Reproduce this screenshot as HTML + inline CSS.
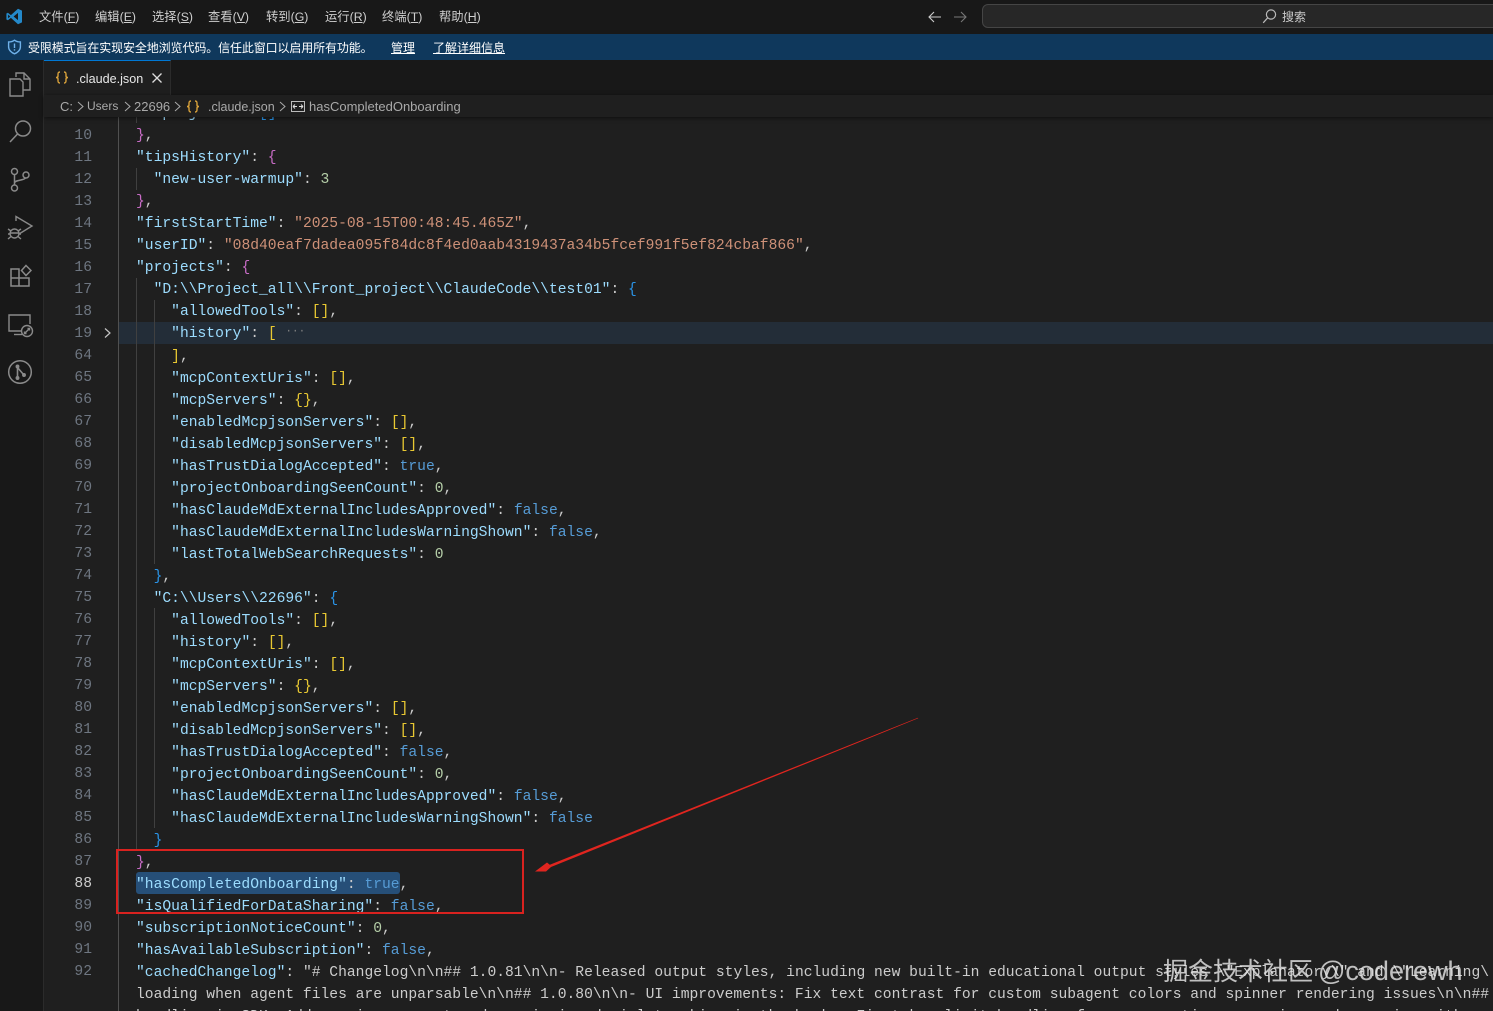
<!DOCTYPE html>
<html lang="zh">
<head>
<meta charset="utf-8">
<title>.claude.json</title>
<style>
html,body{margin:0;padding:0;background:#1f1f1f;}
#app{position:relative;width:1493px;height:1011px;overflow:hidden;background:#1f1f1f;font-family:"Liberation Sans","Noto Sans CJK SC",sans-serif;color:#ccc;}
.abs{position:absolute;}
#top{left:0;top:0;width:1493px;height:34px;background:#181818;}
.m{position:absolute;top:9px;font-size:12.3px;line-height:16px;color:#cfcfcf;white-space:nowrap;}
.m u{text-underline-offset:1px;}
#banner{left:0;top:34px;width:1493px;height:26px;background:#0f385c;}
#banner .t{position:absolute;top:6px;font-size:12px;line-height:16px;color:#fff;white-space:nowrap;}
#act{left:0;top:60px;width:43px;height:951px;background:#181818;border-right:1px solid #2b2b2b;}
#tabs{left:44px;top:60px;width:1449px;height:35px;background:#181818;}
#tab{left:44px;top:60px;width:127px;height:35px;background:#1f1f1f;border-top:1px solid #0078d4;border-right:1px solid #2b2b2b;box-sizing:border-box;}
#crumb{left:44px;top:95px;width:1449px;height:22px;background:#1f1f1f;box-shadow:0 1px 4px rgba(0,0,0,.55);z-index:5;font-size:13px;line-height:23px;color:#a9a9a9;white-space:nowrap;}
#crumb span{position:absolute;top:0;}
#code,#nums{font-family:"Liberation Mono",monospace;font-size:14.65px;line-height:22px;white-space:pre;}
#nums{left:44px;top:103px;width:48px;text-align:right;color:#6e7681;}
#nums b{font-weight:normal;color:#ccc;}
#code{left:136px;top:103px;width:1357px;color:#ccc;z-index:2;}
.k{color:#9cdcfe}.s{color:#ce9178}.n{color:#b5cea8}.b{color:#569cd6}
.y{color:#e8c832}.p{color:#c86cc6}.c{color:#2a93e6}
.g{position:absolute;width:1px;background:#404040;}
</style>
</head>
<body>
<div id="app">
  <div id="top" class="abs">
    <svg class="abs" style="left:6px;top:8px" width="17" height="17" viewBox="0 0 17 17"><path d="M12 0.7 L16 2.6 V14.4 L12 16.3 L4.9 9.9 L1.9 12.3 L0.4 11.5 V5.5 L1.9 4.7 L4.9 7.1 Z M12 4.9 L7.6 8.5 L12 12.1 Z M2.1 6.7 V10.3 L4.2 8.5 Z" fill="#2489ca" fill-rule="evenodd"/></svg>
    <span class="m" style="left:39px">文件(<u>F</u>)</span>
    <span class="m" style="left:95px">编辑(<u>E</u>)</span>
    <span class="m" style="left:152px">选择(<u>S</u>)</span>
    <span class="m" style="left:208px">查看(<u>V</u>)</span>
    <span class="m" style="left:266px">转到(<u>G</u>)</span>
    <span class="m" style="left:325px">运行(<u>R</u>)</span>
    <span class="m" style="left:382px">终端(<u>T</u>)</span>
    <span class="m" style="left:439px">帮助(<u>H</u>)</span>
    <svg class="abs" style="left:927px;top:9px" width="16" height="16" viewBox="0 0 16 16" fill="none" stroke="#ccc" stroke-width="1.1"><path d="M2 8 H14 M7 3 L2 8 L7 13"/></svg>
    <svg class="abs" style="left:952px;top:9px" width="16" height="16" viewBox="0 0 16 16" fill="none" stroke="#777" stroke-width="1.1"><path d="M2 8 H14 M9 3 L14 8 L9 13"/></svg>
    <div class="abs" style="left:982px;top:4px;width:530px;height:24px;box-sizing:border-box;background:#272727;border:1px solid #454545;border-radius:6px;"></div>
    <svg class="abs" style="left:1262px;top:8px" width="15" height="16" viewBox="0 0 15 16" fill="none" stroke="#bbb" stroke-width="1.2"><circle cx="9" cy="6.5" r="4.6"/><path d="M5.7 9.8 L1.2 14.8"/></svg>
    <span class="m" style="left:1282px;color:#ccc;font-size:12px">搜索</span>
  </div>

  <div id="banner" class="abs">
    <svg class="abs" style="left:7px;top:5px" width="15" height="16" viewBox="0 0 15 16" fill="none" stroke="#6fb1ea" stroke-width="1.4"><path d="M7.5 1.2 C9.5 2.6 11.5 3 13.4 3 V8 C13.4 11 10.5 13.7 7.5 14.8 C4.5 13.7 1.6 11 1.6 8 V3 C3.5 3 5.5 2.6 7.5 1.2 Z"/><path d="M7.5 4.5 V9 M7.5 10.2 V11.6"/></svg>
    <span class="t" style="left:28px;letter-spacing:-0.12px">受限模式旨在实现安全地浏览代码。信任此窗口以启用所有功能。</span>
    <span class="t" style="left:391px;text-decoration:underline">管理</span>
    <span class="t" style="left:433px;text-decoration:underline">了解详细信息</span>
  </div>

  <div id="act" class="abs">
    <svg class="abs" style="left:8px;top:11px" width="24" height="26" viewBox="0 0 24 26" fill="none" stroke="#8a8a8a" stroke-width="1.4"><path d="M8 6 V2 H16 L22 8 V19 H15"/><path d="M16 2 V8 H22"/><path d="M2 8 H12 L15 11 V25 H2 Z"/></svg>
    <svg class="abs" style="left:8px;top:59px" width="25" height="25" viewBox="0 0 25 25" fill="none" stroke="#8a8a8a" stroke-width="1.5"><circle cx="15" cy="9.5" r="7.5"/><path d="M9.5 15 L2 23"/></svg>
    <svg class="abs" style="left:9px;top:107px" width="22" height="26" viewBox="0 0 22 26" fill="none" stroke="#8a8a8a" stroke-width="1.5"><circle cx="5.5" cy="4.5" r="3"/><circle cx="5.5" cy="21" r="3"/><circle cx="17" cy="8" r="3"/><path d="M5.5 7.5 V18 M5.5 16 C6 12.5 14 14 16.5 11"/></svg>
    <svg class="abs" style="left:7px;top:155px" width="27" height="26" viewBox="0 0 27 26" fill="none" stroke="#8a8a8a" stroke-width="1.4"><path d="M9 6 V1.5 L25 11 L12 19"/><circle cx="7.5" cy="18.5" r="4.5"/><path d="M1 14 L4 16 M1 19 H3 M1 24 L4 21.5 M14 14 L11 16 M14 19 H12 M14 24 L11 21.5 M3 18 H12"/></svg>
    <svg class="abs" style="left:9px;top:204px" width="23" height="24" viewBox="0 0 23 24" fill="none" stroke="#8a8a8a" stroke-width="1.5"><path d="M2 5 H10 V22 H2 Z M2 14 H20 V22 H10 V5"/><path d="M17 1.5 L22 6.5 L17 11.5 L12.5 6.5 Z"/></svg>
    <svg class="abs" style="left:7px;top:253px" width="27" height="25" viewBox="0 0 27 25" fill="none" stroke="#8a8a8a" stroke-width="1.4"><path d="M15 18 H2 V2 H23 V11"/><path d="M7 21.5 H15"/><circle cx="20" cy="18" r="5.5"/><path d="M17.5 20.5 L22.5 15.5 M20.5 15.5 H22.5 V17.5 M17.5 18.5 V20.5 H19.5"/></svg>
    <svg class="abs" style="left:7px;top:299px" width="26" height="26" viewBox="0 0 26 26" fill="none" stroke="#8a8a8a" stroke-width="1.5"><circle cx="13" cy="13" r="11.3"/><path d="M10.5 7 V20 M10.5 8.5 L16.5 15.5" stroke-width="1.6"/><circle cx="10.5" cy="7.5" r="1.2" fill="#8a8a8a"/><circle cx="10.5" cy="19" r="1.2" fill="#8a8a8a"/><circle cx="17" cy="16" r="1.2" fill="#8a8a8a"/></svg>
  </div>

  <div id="tabs" class="abs"></div>
  <div id="tab" class="abs">
    <svg class="abs" style="left:11px;top:10px" width="14" height="13" viewBox="0 0 14 13" fill="none" stroke="#d9a23b" stroke-width="1.4"><path d="M5 1 C3.2 1 3 2 3 3.5 V5 C3 6 2 6.5 1 6.5 C2 6.5 3 7 3 8 V9.5 C3 11 3.2 12 5 12"/><path d="M9 1 C10.8 1 11 2 11 3.5 V5 C11 6 12 6.5 13 6.5 C12 6.5 11 7 11 8 V9.5 C11 11 10.8 12 9 12"/></svg>
    <span class="abs" style="left:32px;top:10px;font-size:12.6px;line-height:17px;color:#e8e8e8;white-space:nowrap;">.claude.json</span>
    <svg class="abs" style="left:107px;top:11px" width="12" height="12" viewBox="0 0 12 12" stroke="#ddd" stroke-width="1.3"><path d="M1.5 1.5 L10.5 10.5 M10.5 1.5 L1.5 10.5"/></svg>
  </div>

  <div id="crumb" class="abs">
    <span style="left:16px">C:</span>
    <svg class="abs" style="left:32px;top:6px" width="9" height="11" viewBox="0 0 9 11" fill="none" stroke="#aaa"><path d="M2 1 L7 5.5 L2 10"/></svg>
    <span style="left:43px;font-size:12px">Users</span>
    <svg class="abs" style="left:79px;top:6px" width="9" height="11" viewBox="0 0 9 11" fill="none" stroke="#aaa"><path d="M2 1 L7 5.5 L2 10"/></svg>
    <span style="left:90px">22696</span>
    <svg class="abs" style="left:129px;top:6px" width="9" height="11" viewBox="0 0 9 11" fill="none" stroke="#aaa"><path d="M2 1 L7 5.5 L2 10"/></svg>
    <svg class="abs" style="left:142px;top:5px" width="14" height="13" viewBox="0 0 14 13" fill="none" stroke="#d9a23b" stroke-width="1.4"><path d="M5 1 C3.2 1 3 2 3 3.5 V5 C3 6 2 6.5 1 6.5 C2 6.5 3 7 3 8 V9.5 C3 11 3.2 12 5 12"/><path d="M9 1 C10.8 1 11 2 11 3.5 V5 C11 6 12 6.5 13 6.5 C12 6.5 11 7 11 8 V9.5 C11 11 10.8 12 9 12"/></svg>
    <span style="left:164px;top:1px;font-size:12.5px">.claude.json</span>
    <svg class="abs" style="left:234px;top:6px" width="9" height="11" viewBox="0 0 9 11" fill="none" stroke="#aaa"><path d="M2 1 L7 5.5 L2 10"/></svg>
    <svg class="abs" style="left:247px;top:6px" width="14" height="11" viewBox="0 0 14 11"><rect x="0.5" y="0.5" width="13" height="10" fill="none" stroke="#bbb"/><path d="M2 5.5 H6 M2 5.5 L4 3.5 M2 5.5 L4 7.5 M12 5.5 H8 M12 5.5 L10 3.5 M12 5.5 L10 7.5" stroke="#ddd" fill="none"/></svg>
    <span style="left:265px">hasCompletedOnboarding</span>
  </div>

  <!-- folded line highlight -->
  <div class="abs" style="left:119px;top:322px;width:1374px;height:22px;background:#232d38;"></div>
  <!-- selection -->
  <div class="abs" style="left:136px;top:872px;width:264px;height:22px;background:#264f78;border-radius:3px;"></div>

  <!-- guides -->
  <div class="g" style="left:118px;top:117px;height:894px;background:#505050;"></div>
  <div class="g" style="left:136px;top:117px;height:6px;"></div>
  <div class="g" style="left:136px;top:168px;height:22px;"></div>
  <div class="g" style="left:136px;top:278px;height:572px;"></div>
  <div class="g" style="left:154px;top:300px;height:264px;"></div>
  <div class="g" style="left:154px;top:608px;height:220px;"></div>

  <div id="nums" class="abs"> 9
10
11
12
13
14
15
16
17
18
19
64
65
66
67
68
69
70
71
72
73
74
75
76
77
78
79
80
81
82
83
84
85
86
87
<b>88</b>
89
90
91
92</div>

  <svg class="abs" style="left:103px;top:327px" width="9" height="12" viewBox="0 0 9 12" fill="none" stroke="#c5c5c5" stroke-width="1.2"><path d="M2 1.5 L7 6 L2 10.5"/></svg>

  <div id="code" class="abs">  <span class="k">"projects"</span>: <span class="c">[]</span>
<span class="p">}</span>,
<span class="k">"tipsHistory"</span>: <span class="p">{</span>
  <span class="k">"new-user-warmup"</span>: <span class="n">3</span>
<span class="p">}</span>,
<span class="k">"firstStartTime"</span>: <span class="s">"2025-08-15T00:48:45.465Z"</span>,
<span class="k">"userID"</span>: <span class="s">"08d40eaf7dadea095f84dc8f4ed0aab4319437a34b5fcef991f5ef824cbaf866"</span>,
<span class="k">"projects"</span>: <span class="p">{</span>
  <span class="k">"D:\\Project_all\\Front_project\\ClaudeCode\\test01"</span>: <span class="c">{</span>
    <span class="k">"allowedTools"</span>: <span class="y">[]</span>,
    <span class="k">"history"</span>: <span class="y">[</span> <span style="color:#808080;font-size:11px;position:relative;top:-3px">···</span>
    <span class="y">]</span>,
    <span class="k">"mcpContextUris"</span>: <span class="y">[]</span>,
    <span class="k">"mcpServers"</span>: <span class="y">{}</span>,
    <span class="k">"enabledMcpjsonServers"</span>: <span class="y">[]</span>,
    <span class="k">"disabledMcpjsonServers"</span>: <span class="y">[]</span>,
    <span class="k">"hasTrustDialogAccepted"</span>: <span class="b">true</span>,
    <span class="k">"projectOnboardingSeenCount"</span>: <span class="n">0</span>,
    <span class="k">"hasClaudeMdExternalIncludesApproved"</span>: <span class="b">false</span>,
    <span class="k">"hasClaudeMdExternalIncludesWarningShown"</span>: <span class="b">false</span>,
    <span class="k">"lastTotalWebSearchRequests"</span>: <span class="n">0</span>
  <span class="c">}</span>,
  <span class="k">"C:\\Users\\22696"</span>: <span class="c">{</span>
    <span class="k">"allowedTools"</span>: <span class="y">[]</span>,
    <span class="k">"history"</span>: <span class="y">[]</span>,
    <span class="k">"mcpContextUris"</span>: <span class="y">[]</span>,
    <span class="k">"mcpServers"</span>: <span class="y">{}</span>,
    <span class="k">"enabledMcpjsonServers"</span>: <span class="y">[]</span>,
    <span class="k">"disabledMcpjsonServers"</span>: <span class="y">[]</span>,
    <span class="k">"hasTrustDialogAccepted"</span>: <span class="b">false</span>,
    <span class="k">"projectOnboardingSeenCount"</span>: <span class="n">0</span>,
    <span class="k">"hasClaudeMdExternalIncludesApproved"</span>: <span class="b">false</span>,
    <span class="k">"hasClaudeMdExternalIncludesWarningShown"</span>: <span class="b">false</span>
  <span class="c">}</span>
<span class="p">}</span>,
<span class="k">"hasCompletedOnboarding"</span>: <span class="b">true</span>,
<span class="k">"isQualifiedForDataSharing"</span>: <span class="b">false</span>,
<span class="k">"subscriptionNoticeCount"</span>: <span class="n">0</span>,
<span class="k">"hasAvailableSubscription"</span>: <span class="b">false</span>,
<span class="k">"cachedChangelog"</span>: <span class="s" style="color:#ccc">"# Changelog\n\n## 1.0.81\n\n- Released output styles, including new built-in educational output styles \"Explanatory\" and \"Learning\</span>
<span style="color:#ccc">loading when agent files are unparsable\n\n## 1.0.80\n\n- UI improvements: Fix text contrast for custom subagent colors and spinner rendering issues\n\n##</span>
<span style="color:#ccc">handling in SDK: Add session support and permission denial tracking in the hooks: Fix token limit handling for conversation summaries and resuming with</span></div>

  <!-- annotations -->
  <svg class="abs" style="left:0;top:0;z-index:6" width="1493" height="1011" viewBox="0 0 1493 1011">
    <rect x="117" y="850" width="406" height="63" fill="none" stroke="#d9221f" stroke-width="2"/>
    <path d="M918 717.7 L918.2 718.3 L551 867 L546 871.5 L535 871.5 L547 862.5 L549.8 864.8 Z" fill="#e0251f"/>
  </svg>

  <div class="abs" style="left:1163px;top:957px;z-index:7;font-size:25px;line-height:30px;color:rgba(228,228,228,.82);white-space:nowrap;">掘金技术社区</div>
  <div class="abs" style="left:1318px;top:956px;z-index:7;font-size:27px;line-height:30px;color:rgba(228,228,228,.82);white-space:nowrap;">@coderewh</div>
</div>
</body>
</html>
